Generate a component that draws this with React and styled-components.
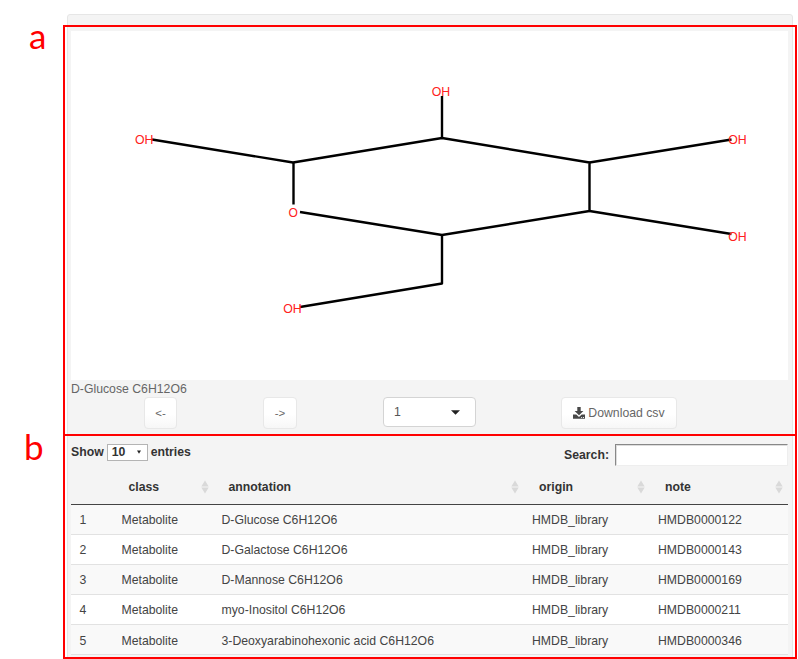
import React from "react";
import styled, { createGlobalStyle } from "styled-components";

const GlobalStyle = createGlobalStyle`
  * { box-sizing: border-box; }
  html, body { margin: 0; background: #fff; }
  body { font-family: "Liberation Sans", Arial, sans-serif; font-size: 12.25px; color: #444; }
`;

const Page = styled.main`
  position: relative;
  width: 798px;
  height: 659px;
  padding: 14px 5px 0 67px;
  overflow: hidden;
`;

const Panel = styled.section`
  height: 660px;
  padding: 16px 4px 0 3px;
  background: #f4f4f4;
  border: 1px solid #e6e6e6;
  border-radius: 3px;
`;

const Plot = styled.svg`
  display: block;
  width: 717px;
  height: 349px;
  background: #fff;
`;

const Bonds = styled.g`
  stroke: #000;
  stroke-width: 2.4;
  stroke-linecap: butt;
  stroke-linejoin: round;
  fill: none;
`;

const Atom = styled.text`
  fill: #ff2020;
  font-family: "Liberation Sans", Arial, sans-serif;
  font-size: 13px;
`;

const Caption = styled.div`
  height: 17px;
  line-height: 18px;
  color: #666;
`;

const ControlRow = styled.div`
  display: grid;
  grid-template-columns: 119px 120px 178px 1fr;
  height: 46px;
  padding-left: 73px;
  align-items: start;
`;

const Button = styled.button`
  width: ${(p) => p.$width}px;
  height: 32px;
  padding: 0;
  display: inline-flex;
  align-items: center;
  justify-content: center;
  gap: 3px;
  border: 1px solid #e8e8e8;
  border-radius: 4px;
  background: linear-gradient(#fff 55%, #f7f7f7);
  font: inherit;
  font-size: ${(p) => p.$size || 11.5}px;
  color: #666;
`;

const Picker = styled.div`
  width: 93px;
  height: 30px;
  padding: 0 15px 0 10px;
  display: flex;
  align-items: center;
  justify-content: space-between;
  border: 1px solid #d4d4d4;
  border-radius: 4px;
  background: #fff;
  color: #555;
`;

const Filters = styled.div`
  height: 28px;
  display: flex;
  justify-content: space-between;
  align-items: flex-start;
  font-weight: bold;
  color: #333;
`;

const Length = styled.label`
  display: flex;
  align-items: center;
  height: 18px;
  gap: 3px;
`;

const LengthBox = styled.span`
  width: 41px;
  height: 17px;
  padding: 0 6px 0 4px;
  display: flex;
  align-items: center;
  justify-content: space-between;
  border: 1px solid #b4b4b4;
  background: #fff;
`;

const Search = styled.label`
  display: flex;
  align-items: center;
  gap: 6px;
  height: 23px;
`;

const SearchInput = styled.input`
  width: 173px;
  height: 22px;
  border: 1px solid #eee;
  border-top: 1px solid #888;
  border-left: 1px solid #888;
  border-radius: 0;
  background: #fff;
  box-shadow: inset 1px 1px 0 #ddd;
`;

const Table = styled.table`
  width: 717px;
  table-layout: fixed;
  border-collapse: separate;
  border-spacing: 0;
`;

const Col = styled.col`
  width: ${(p) => p.$width}px;
`;

const HeadCell = styled.th`
  height: 33.5px;
  padding: 0 6px 1px 14px;
  border-bottom: 1.5px solid #444;
  text-align: left;
  color: #333;

  &:last-child {
    padding-right: 5px;
  }
`;

const HeadContent = styled.div`
  display: flex;
  align-items: center;
  justify-content: space-between;
`;

const Row = styled.tr`
  height: 30.2px;
  background: ${(p) => (p.$striped ? "#f9f9f9" : "#fff")};
`;

const Cell = styled.td`
  padding: 1.4px 7px 0;
  padding-left: ${(p) => (p.$index ? 8.5 : 7)}px;
  border-bottom: 1px solid #e2e2e2;
  white-space: nowrap;
`;

const Frame = styled.div`
  position: absolute;
  left: 63px;
  top: ${(p) => p.$top}px;
  width: 734px;
  height: ${(p) => p.$height}px;
  border: 2px solid #f00;
  pointer-events: none;
`;

const Letter = styled.span`
  position: absolute;
  left: ${(p) => p.$left}px;
  top: ${(p) => p.$top}px;
  font: 35px/44px Lato, sans-serif;
  color: #f00;
`;

const bonds = [
  "M152 139.5L293 162.5L442 138L589.5 162.5V211L442 235L300 212",
  "M293.5 162.5V204.5",
  "M442 138V96",
  "M589.5 162.5L731.5 139.5",
  "M589.5 211L731.5 234",
  "M442 235V283.5L300 307",
];

const atoms = [
  [135, 144.4, "OH"],
  [431.7, 96.2, "OH"],
  [728.2, 144.4, "OH"],
  [728.2, 241.4, "OH"],
  [288.4, 216.9, "O"],
  [283.2, 313.4, "OH"],
];

const columns = [
  ["", 43.5],
  ["class", 100],
  ["annotation", 310.5],
  ["origin", 126],
  ["note", 137],
];

const rows = [
  ["D-Glucose C6H12O6", "HMDB0000122"],
  ["D-Galactose C6H12O6", "HMDB0000143"],
  ["D-Mannose C6H12O6", "HMDB0000169"],
  ["myo-Inositol C6H12O6", "HMDB0000211"],
  ["3-Deoxyarabinohexonic acid C6H12O6", "HMDB0000346"],
];

const SortIcon = () => (
  <svg width="8" height="14" viewBox="0 0 8 14" fill="#d9d9d9">
    <path d="M4 0.5L7.7 6.4H0.3zM4 13.5L7.7 7.6H0.3z" />
  </svg>
);

const DownloadIcon = () => (
  <svg width="12" height="12" viewBox="0 0 12 12" fill="#484848">
    <path d="M4.3 0h3.4v4h2.7L6 8.3 1.6 4h2.7z" />
    <path
      fillRule="evenodd"
      d="M0 7.5h3.3L6 10l2.7-2.5H12v4.3H0zM8.2 10h.9v.9h-.9zM10 10h.9v.9H10z"
    />
  </svg>
);

export default function App() {
  return (
    <>
      <GlobalStyle />
      <Page>
        <Panel>
          <Plot viewBox="71 31 717 349">
            <Bonds>
              {bonds.map((d) => (
                <path key={d} d={d} />
              ))}
            </Bonds>
            {atoms.map(([x, y, label]) => (
              <Atom
                key={`${x}-${y}`}
                x={x}
                y={y}
                textLength={label.length === 2 ? 18.5 : 9.4}
                lengthAdjust="spacingAndGlyphs"
              >
                {label}
              </Atom>
            ))}
          </Plot>
          <Caption>D-Glucose C6H12O6</Caption>
          <ControlRow>
            <Button $width={33}>&lt;-</Button>
            <Button $width={34}>-&gt;</Button>
            <Picker>
              1
              <svg width="9" height="5" viewBox="0 0 9 5" fill="#222">
                <path d="M0 0.3h9L4.5 4.8z" />
              </svg>
            </Picker>
            <Button $width={116} $size={12.25}>
              <DownloadIcon />
              Download csv
            </Button>
          </ControlRow>
          <Filters>
            <Length>
              Show
              <LengthBox>
                10
                <svg width="4" height="4" viewBox="0 0 4 4" fill="#222">
                  <path d="M0 0.5h4L2 3.7z" />
                </svg>
              </LengthBox>
              entries
            </Length>
            <Search>
              Search:
              <SearchInput type="text" />
            </Search>
          </Filters>
          <Table>
            <colgroup>
              {columns.map(([name, width]) => (
                <Col key={name} $width={width} />
              ))}
            </colgroup>
            <thead>
              <tr>
                {columns.map(([name]) => (
                  <HeadCell key={name}>
                    {name && (
                      <HeadContent>
                        {name}
                        <SortIcon />
                      </HeadContent>
                    )}
                  </HeadCell>
                ))}
              </tr>
            </thead>
            <tbody>
              {rows.map(([annotation, note], i) => (
                <Row key={note} $striped={i % 2 === 0}>
                  <Cell $index>{i + 1}</Cell>
                  <Cell>Metabolite</Cell>
                  <Cell>{annotation}</Cell>
                  <Cell>HMDB_library</Cell>
                  <Cell>{note}</Cell>
                </Row>
              ))}
            </tbody>
          </Table>
        </Panel>
        <Frame $top={25} $height={411} />
        <Frame $top={434} $height={225} />
        <Letter $left={29} $top={13}>a</Letter>
        <Letter $left={24} $top={424}>b</Letter>
      </Page>
    </>
  );
}
